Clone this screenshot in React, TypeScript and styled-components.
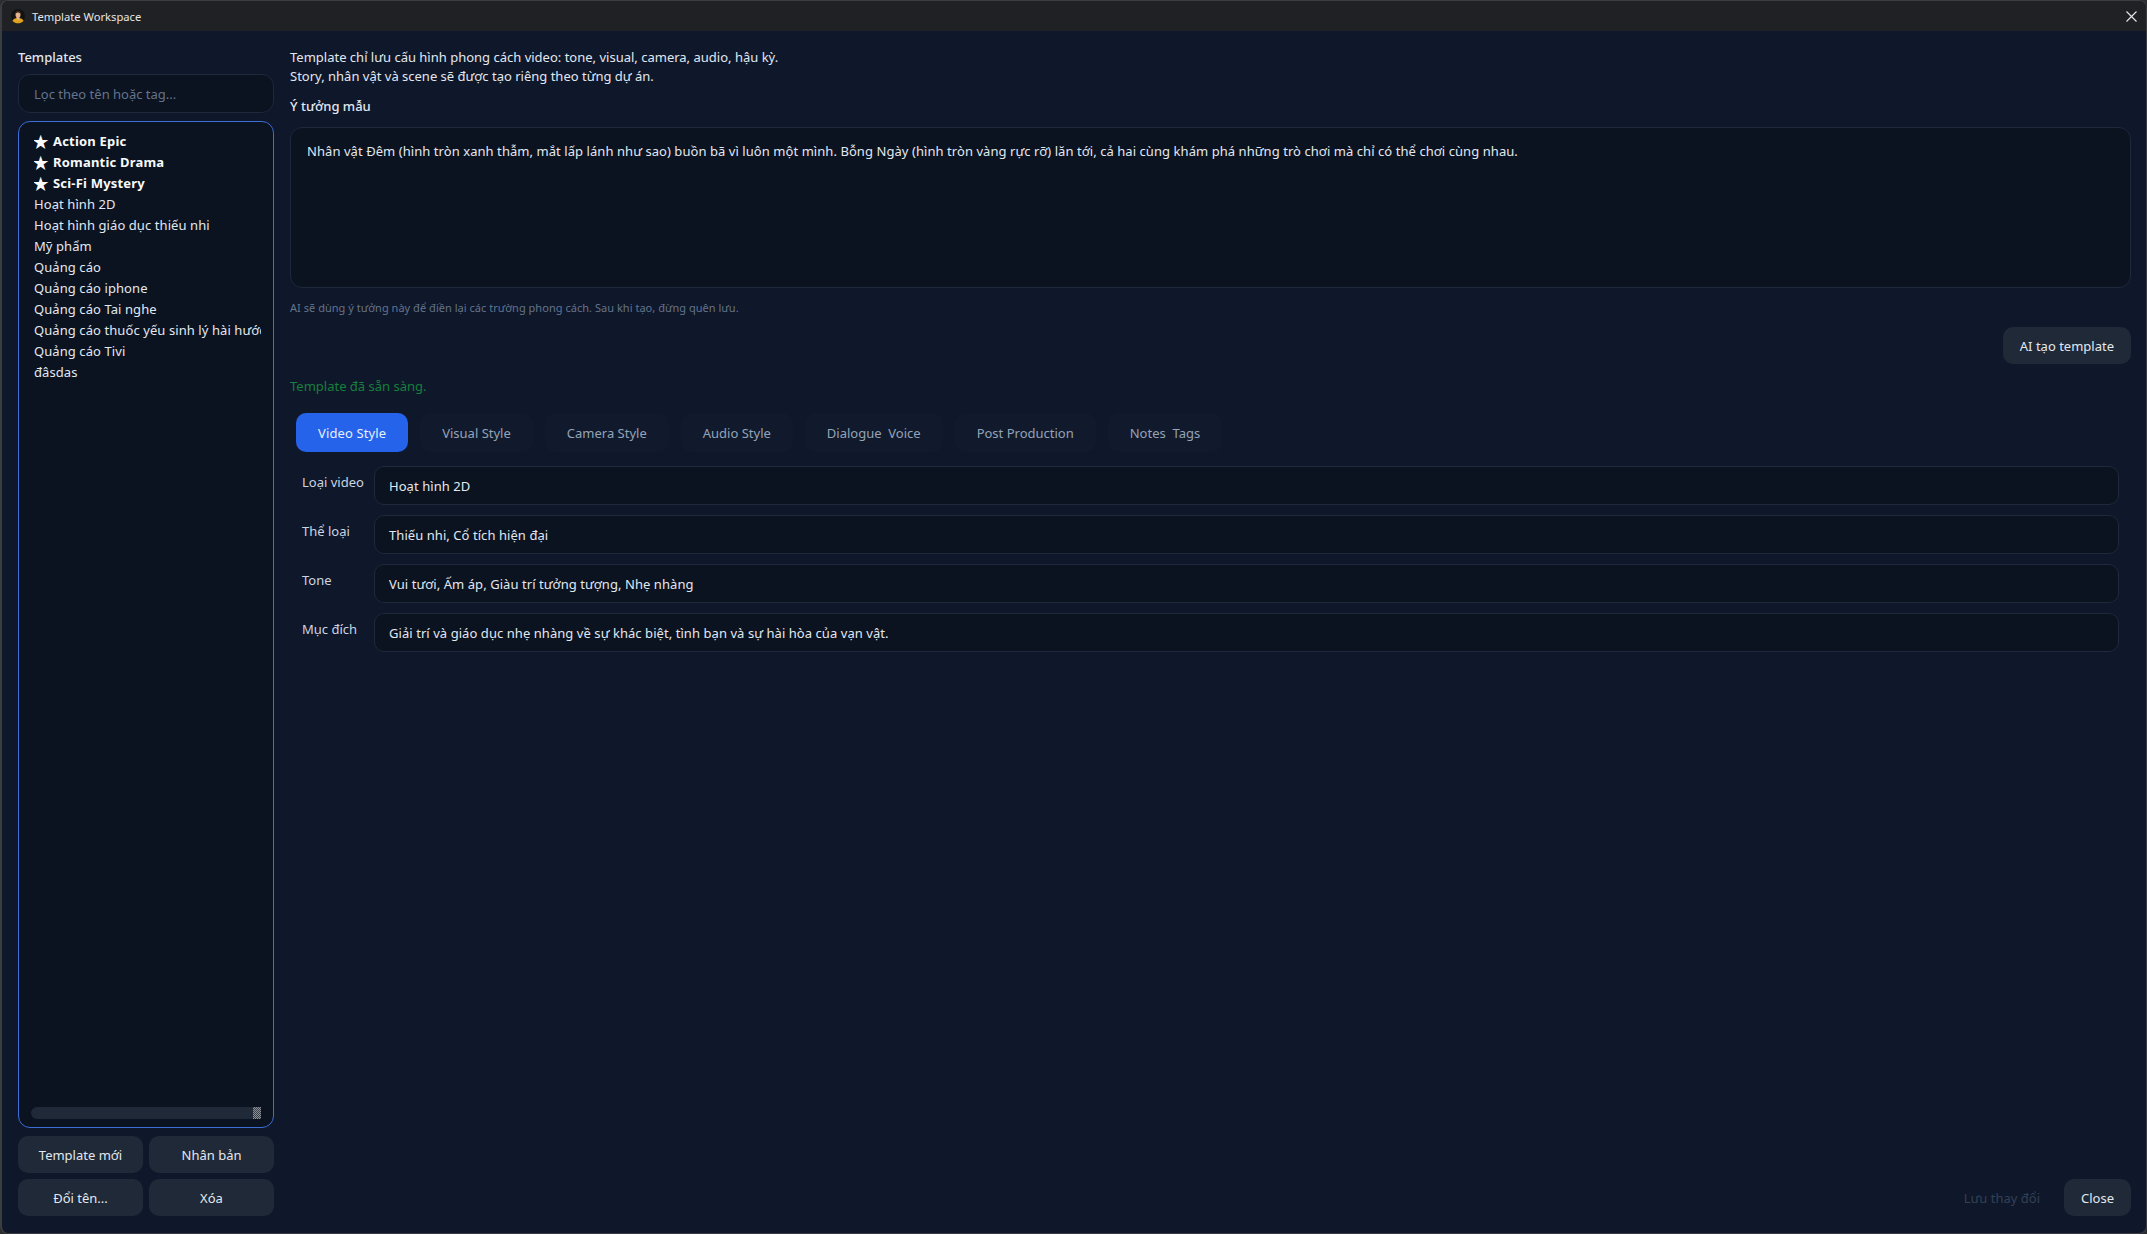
import React from "react";
import styled, { createGlobalStyle } from "styled-components";

const GlobalStyle = createGlobalStyle`
  html, body {
    margin: 0;
    height: 100%;
    overflow: hidden;
    background: #2b2d31;
  }
  #root {
    height: 100%;
  }
  * {
    box-sizing: border-box;
  }
`;

const Window = styled.div`
  width: 2147px;
  height: 1234px;
  display: flex;
  flex-direction: column;
  overflow: hidden;
  border: 1px solid #3c3d40;
  border-left-width: 2px;
  border-radius: 8px;
  background: #0f172a;
  color: #e2e8f0;
  font-family: "Noto Sans", "Open Sans", sans-serif;
  font-size: 13px;
`;

const TitleBar = styled.div`
  height: 30px;
  flex: none;
  display: flex;
  align-items: center;
  padding: 0 9px 0 9px;
  gap: 7px;
  background: #202124;
`;

const TitleText = styled.div`
  flex: 1;
  font-size: 11.2px;
  color: #e6e6e6;
`;

const Body = styled.div`
  flex: 1;
  min-height: 0;
  display: grid;
  grid-template-columns: 256px 1fr;
  gap: 16px;
  padding: 16px 15px 17px 16px;
`;

const Sidebar = styled.div`
  display: flex;
  flex-direction: column;
  min-height: 0;
`;

const SectionTitle = styled.div`
  height: 20px;
  line-height: 20px;
  font-weight: 500;
  color: #e2e8f0;
`;

const FilterInput = styled.input`
  height: 39px;
  margin-top: 7px;
  padding: 0 15px;
  border: 1px solid #1e293b;
  border-radius: 12px;
  background: #0b1220;
  color: #e2e8f0;
  font: inherit;
  outline: none;

  &::placeholder {
    color: #64748b;
    opacity: 1;
  }
`;

const ListBox = styled.div`
  flex: 1;
  min-height: 0;
  margin-top: 8px;
  padding: 9px 12px 6px 15px;
  display: flex;
  flex-direction: column;
  border: 1px solid #3b6fd4;
  border-radius: 12px;
  background: #0b1220;
`;

const ListItems = styled.div`
  flex: 1;
  min-height: 0;
  overflow: hidden;
`;

const ListItem = styled.div<{ $pinned?: boolean }>`
  height: 21px;
  line-height: 21px;
  display: flex;
  align-items: center;
  white-space: nowrap;
  overflow: hidden;
  letter-spacing: ${({ $pinned }) => ($pinned ? "0.2px" : "0.08px")};
  font-weight: ${({ $pinned }) => ($pinned ? 700 : 400)};
  color: ${({ $pinned }) => ($pinned ? "#f8fafc" : "#e2e8f0")};
`;

const Star = styled.span`
  flex: none;
  width: 20px;
  font-size: 17px;
  line-height: 21px;
  margin-left: -1px;
`;

const ScrollTrack = styled.div`
  flex: none;
  height: 12px;
  margin: 0 0 2px -3px;
  display: flex;
  justify-content: flex-end;
  border-radius: 6px;
  background: #1f2937;
`;

const ScrollCorner = styled.div`
  width: 8px;
  background: repeating-conic-gradient(#8a8f98 0 25%, #3a3f48 0 50%) 0 0 / 2px 2px;
`;

const ButtonGrid = styled.div`
  display: grid;
  grid-template-columns: 1fr 1fr;
  gap: 6px;
  margin-top: 8px;
`;

const Button = styled.button<{ $ghost?: boolean }>`
  height: 37px;
  padding: 0 17px;
  border: 0;
  border-radius: 10px;
  background: ${({ $ghost }) => ($ghost ? "transparent" : "#1f2937")};
  color: ${({ $ghost }) => ($ghost ? "#334155" : "#e2e8f0")};
  font: inherit;
`;

const Main = styled.div`
  display: flex;
  flex-direction: column;
  min-height: 0;
  min-width: 0;
`;

const Intro = styled.div`
  margin-top: 1px;
  line-height: 19px;
  color: #e2e8f0;
`;

const IdeaLabel = styled(SectionTitle)`
  margin-top: 10px;
`;

const IdeaBox = styled.div`
  height: 161px;
  margin-top: 11px;
  padding: 13px 16px;
  border: 1px solid #1e293b;
  border-radius: 12px;
  background: #0b1220;
  line-height: 20px;
  letter-spacing: 0.06px;
  color: #e2e8f0;
`;

const Hint = styled.div`
  margin-top: 12px;
  font-size: 11px;
  line-height: 16px;
  letter-spacing: 0.03px;
  color: #64748b;
`;

const AiRow = styled.div`
  display: flex;
  justify-content: flex-end;
  margin-top: 11px;
`;

const Status = styled.div`
  margin-top: 12px;
  line-height: 20px;
  color: #16803c;
`;

const TabBar = styled.div`
  display: flex;
  gap: 12px;
  margin: 17px 0 0 6px;
`;

const Tab = styled.div<{ $active?: boolean }>`
  height: 39px;
  padding: 0 22px;
  display: flex;
  align-items: center;
  border-radius: 10px;
  background: ${({ $active }) => ($active ? "#2563eb" : "#111a2c")};
  color: ${({ $active }) => ($active ? "#e8efff" : "#94a3b8")};
  letter-spacing: ${({ $active }) => ($active ? "0.12px" : "0")};
  white-space: pre;
`;

const Fields = styled.div`
  display: flex;
  flex-direction: column;
  gap: 10px;
  margin: 14px 12px 0 12px;
`;

const FieldRow = styled.div`
  display: grid;
  grid-template-columns: 72px 1fr;
`;

const FieldLabel = styled.div`
  padding-top: 7px;
  line-height: 18px;
  color: #cbd5e1;
`;

const FieldValue = styled.div`
  height: 39px;
  padding: 0 14px;
  display: flex;
  align-items: center;
  border: 1px solid #1e293b;
  border-radius: 10px;
  background: #0b1220;
  letter-spacing: 0.06px;
  color: #e2e8f0;
`;

const Footer = styled.div`
  margin-top: auto;
  display: flex;
  justify-content: flex-end;
  gap: 7px;
`;

const templates = [
  "Hoạt hình 2D",
  "Hoạt hình giáo dục thiếu nhi",
  "Mỹ phẩm",
  "Quảng cáo",
  "Quảng cáo iphone",
  "Quảng cáo Tai nghe",
  "Quảng cáo thuốc yếu sinh lý hài hước",
  "Quảng cáo Tivi",
  "đâsdas",
];

const pinned = ["Action Epic", "Romantic Drama", "Sci-Fi Mystery"];

const tabs = [
  "Video Style",
  "Visual Style",
  "Camera Style",
  "Audio Style",
  "Dialogue  Voice",
  "Post Production",
  "Notes  Tags",
];

const fields = [
  ["Loại video", "Hoạt hình 2D"],
  ["Thể loại", "Thiếu nhi, Cổ tích hiện đại"],
  ["Tone", "Vui tươi, Ấm áp, Giàu trí tưởng tượng, Nhẹ nhàng"],
  ["Mục đích", "Giải trí và giáo dục nhẹ nhàng về sự khác biệt, tình bạn và sự hài hòa của vạn vật."],
];

const AppIcon = () => (
  <svg width="14" height="16" viewBox="0 0 14 16">
    <circle cx="7" cy="8" r="7" fill="#121212" />
    <path d="M1.500 13c.5-2 2.500-3 5.500-3s5 1 5.500 3c-1.500 1.500-3.500 2.300-5.500 2.300S3 14.500 1.500 13z" fill="#e0a21a" />
    <path d="M5.500 8h3v3L7 12.500 5.500 11z" fill="#e3b18c" />
    <ellipse cx="7" cy="6.500" rx="2.500" ry="3.200" fill="#e3b18c" />
    <path d="M4.300 6.500C4 3.500 5.300 2.500 7 2.500s3 1 2.700 4C9.200 5 8 4.500 7 4.500S4.800 5 4.300 6.500z" fill="#2e2018" />
  </svg>
);

const CloseIcon = () => (
  <svg width="11" height="11" viewBox="0 0 11 11">
    <path d="M0.500 0.500l10 10M10.500 0.500l-10 10" stroke="#e8e8e8" strokeWidth="1.100" fill="none" />
  </svg>
);

export default function App() {
  return (
    <>
      <GlobalStyle />
      <Window>
        <TitleBar>
          <AppIcon />
          <TitleText>Template Workspace</TitleText>
          <CloseIcon />
        </TitleBar>
        <Body>
          <Sidebar>
            <SectionTitle>Templates</SectionTitle>
            <FilterInput placeholder="Lọc theo tên hoặc tag..." readOnly />
            <ListBox>
              <ListItems>
                {pinned.map((name) => (
                  <ListItem key={name} $pinned><Star>★</Star>{name}</ListItem>
                ))}
                {templates.map((name) => (
                  <ListItem key={name}>{name}</ListItem>
                ))}
              </ListItems>
              <ScrollTrack>
                <ScrollCorner />
              </ScrollTrack>
            </ListBox>
            <ButtonGrid>
              <Button>Template mới</Button>
              <Button>Nhân bản</Button>
              <Button>Đổi tên...</Button>
              <Button>Xóa</Button>
            </ButtonGrid>
          </Sidebar>
          <Main>
            <Intro>
              Template chỉ lưu cấu hình phong cách video: tone, visual, camera, audio, hậu kỳ.
              <br />
              Story, nhân vật và scene sẽ được tạo riêng theo từng dự án.
            </Intro>
            <IdeaLabel>Ý tưởng mẫu</IdeaLabel>
            <IdeaBox>
              Nhân vật Đêm (hình tròn xanh thẫm, mắt lấp lánh như sao) buồn bã vì luôn một mình. Bỗng Ngày (hình tròn vàng rực rỡ) lăn tới, cả hai cùng khám phá những trò chơi mà chỉ có thể chơi cùng nhau.
            </IdeaBox>
            <Hint>AI sẽ dùng ý tưởng này để điền lại các trường phong cách. Sau khi tạo, đừng quên lưu.</Hint>
            <AiRow>
              <Button>AI tạo template</Button>
            </AiRow>
            <Status>Template đã sẵn sàng.</Status>
            <TabBar>
              {tabs.map((tab, i) => (
                <Tab key={tab} $active={i === 0}>{tab}</Tab>
              ))}
            </TabBar>
            <Fields>
              {fields.map(([label, value]) => (
                <FieldRow key={label}>
                  <FieldLabel>{label}</FieldLabel>
                  <FieldValue>{value}</FieldValue>
                </FieldRow>
              ))}
            </Fields>
            <Footer>
              <Button $ghost>Lưu thay đổi</Button>
              <Button>Close</Button>
            </Footer>
          </Main>
        </Body>
      </Window>
    </>
  );
}
